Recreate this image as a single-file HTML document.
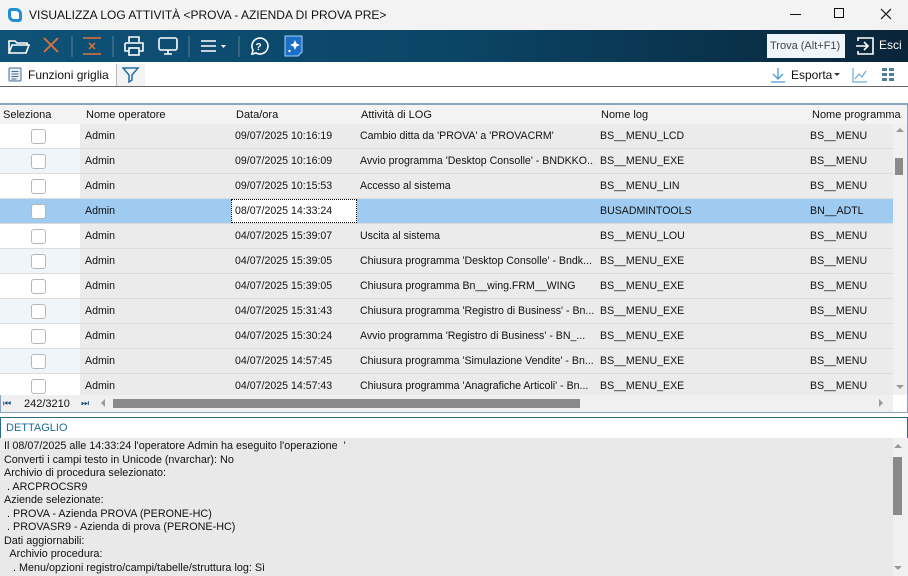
<!DOCTYPE html>
<html><head><meta charset="utf-8"><style>
*{box-sizing:border-box;margin:0;padding:0}
html,body{width:908px;height:576px;overflow:hidden}
body{background:#fff;font-family:"Liberation Sans","DejaVu Sans",sans-serif;font-size:11px;color:#111;position:relative}
.abs{position:absolute}
#title{left:0;top:0;width:908px;height:30px;background:#f3f3f3;font-size:12px}
#tb{left:0;top:30px;width:908px;height:32px;background:linear-gradient(90deg,#0f5278 0%,#0b4566 50%,#0a2438 100%)}
#gt{left:0;top:62px;width:908px;height:25px;background:#fff;border-bottom:1px solid #666}
.hd{top:104px;height:21px;background:#f3f3f3;border:1px solid #8aa3c0;border-left:none;padding:4px 3px;font-size:11px;white-space:nowrap;overflow:hidden}
.row{position:absolute;left:0;width:893px;height:25px;background:#ebebeb;border-bottom:1px solid #dcdcdc;font-size:10.6px}
.row div{position:absolute;top:6px;white-space:nowrap}
.row .sel{left:0;top:0;width:80px;height:24px;background:#fff}
.row .cb{left:31px;top:5px;width:15px;height:15px;border:1px solid #b7b7b7;border-radius:3px;background:#fff}
.row.s{background:#9fcbf1}
.row.s .sel{background:#9fcbf1}
#det{left:0;top:438px;width:893px;height:138px;background:#e9e9e9;padding:2px 4px;font-size:10.8px;line-height:13.5px;white-space:pre;overflow:hidden}
</style></head><body>
<div id="title" class="abs">
 <div class="abs" style="left:8px;top:8px;width:14px;height:14px;background:#1e8fd8;border-radius:3px 6px 3px 6px"></div>
 <div class="abs" style="left:11px;top:11px;width:8px;height:8px;background:#fff;border-radius:1px 3px 1px 3px"></div>
 <div class="abs" style="left:29px;top:8px">VISUALIZZA LOG ATTIVITÀ &lt;PROVA - AZIENDA DI PROVA PRE&gt;</div>
 <div class="abs" style="left:790px;top:14px;width:11px;height:1px;background:#111"></div>
 <div class="abs" style="left:834px;top:8px;width:10px;height:10px;border:1px solid #111"></div>
 <svg class="abs" style="left:880px;top:8px" width="12" height="12"><path d="M1 1L11 11M11 1L1 11" stroke="#111" stroke-width="1.2"/></svg>
</div>
<div id="tb" class="abs">
 <svg class="abs" style="left:0;top:0" width="310" height="32">
  <path d="M9 11h6l2 2h10v2H12l-3 8zM9 23l3-8h17l-3 8z" fill="none" stroke="#fff" stroke-width="1.6"/>
  <path d="M44 8L58 22M58 8L44 22" stroke="#e0743a" stroke-width="1.8"/>
  <line x1="72" y1="6" x2="72" y2="27" stroke="#5a7f96"/>
  <path d="M83 8h18M83 24h18" stroke="#e0743a" stroke-width="1.5"/><path d="M89 13l6 6M95 13l-6 6" stroke="#e0743a" stroke-width="1.5"/>
  <line x1="113" y1="6" x2="113" y2="27" stroke="#5a7f96"/>
  <path d="M129 12V7h10v5M125 13h18v8h-4M129 21h-4v-8" fill="none" stroke="#fff" stroke-width="1.6"/><rect x="129" y="18" width="10" height="7" fill="none" stroke="#fff" stroke-width="1.6"/>
  <rect x="159" y="8" width="18" height="12" rx="2" fill="none" stroke="#fff" stroke-width="1.6"/><path d="M164 24h8M168 20v4" stroke="#fff" stroke-width="1.6"/>
  <line x1="189" y1="6" x2="189" y2="27" stroke="#5a7f96"/>
  <path d="M201 11h15M201 16h15M201 21h15" stroke="#fff" stroke-width="1.6"/><path d="M221 15h5l-2.5 3z" fill="#fff"/>
  <line x1="239" y1="6" x2="239" y2="27" stroke="#5a7f96"/>
  <path d="M252 24l1-4a8 8 0 1 1 3 3z" fill="none" stroke="#fff" stroke-width="1.6"/><text x="255.5" y="20" fill="#fff" font-size="10" font-weight="bold" font-family="Liberation Sans">?</text>
  <path d="M285 6h17v16l-4 4h-13z" fill="#1c6fc7" stroke="#9fd0ff" stroke-width="1"/><path d="M295 10l1.5 3.5 3.5 1.5-3.5 1.5-1.5 3.5-1.5-3.5-3.5-1.5 3.5-1.5z" fill="#fff"/><circle cx="289.5" cy="21" r="1.2" fill="#fff"/>
 </svg>
 <div class="abs" style="left:767px;top:4px;width:78px;height:24px;background:#eef5fb;color:#444;padding:6px 3px;font-size:11px;white-space:nowrap;overflow:hidden">Trova (Alt+F1)</div>
 <svg class="abs" style="left:855px;top:5px" width="22" height="22"><path d="M3 6V3h15v16H3v-3" fill="none" stroke="#fff" stroke-width="1.6"/><path d="M1 11h12M9 7l4 4-4 4" fill="none" stroke="#fff" stroke-width="1.6"/></svg>
 <div class="abs" style="left:879px;top:8px;color:#fff;font-size:12px">Esci</div>
</div>
<div id="gt" class="abs">
 <svg class="abs" style="left:8px;top:5px" width="14" height="15"><rect x="1" y="1" width="12" height="13" rx="1" fill="#e8eef4" stroke="#4a6e8e"/><path d="M3.5 4.5h7M3.5 7h7M3.5 9.5h7M3.5 12h5" stroke="#4a6e8e"/></svg>
 <div class="abs" style="left:28px;top:6px;font-size:12px">Funzioni griglia</div>
 <div class="abs" style="left:116px;top:2px;width:29px;height:22px;border-left:1px solid #bbb;background:#f3f3f3"></div>
 <svg class="abs" style="left:122px;top:5px" width="18" height="16"><path d="M1 1h15l-6 7v5l-3 2V8z" fill="none" stroke="#1f6ea3" stroke-width="1.5"/></svg>
 <svg class="abs" style="left:770px;top:5px" width="16" height="16"><path d="M8 1v10M3 7l5 5 5-5M1 15h14" fill="none" stroke="#4a9bd1" stroke-width="1.3"/></svg>
 <div class="abs" style="left:791px;top:6px;font-size:12px">Esporta</div>
 <div class="abs" style="left:834px;top:11px;border-left:3px solid transparent;border-right:3px solid transparent;border-top:3px solid #333"></div>
 <svg class="abs" style="left:852px;top:5px" width="16" height="16"><path d="M1 1v14h14" fill="none" stroke="#4a9bd1"/><path d="M3 12l4-5 3 3 4-6" fill="none" stroke="#4a9bd1"/></svg>
 <svg class="abs" style="left:882px;top:6px" width="13" height="13"><g fill="#4e7f96"><rect x="0" y="0" width="5" height="3"/><rect x="7" y="0" width="5" height="3"/><rect x="0" y="5" width="5" height="3"/><rect x="7" y="5" width="5" height="3"/><rect x="0" y="10" width="5" height="3"/><rect x="7" y="10" width="5" height="3"/></g></svg>
</div>
<div class="abs" style="left:0;top:103px;width:908px;height:310px;border:1px solid #8aa3c0"></div>
<div class="abs hd" style="left:0;width:81px;">Seleziona</div>
<div class="abs hd" style="left:80px;width:151px;padding-left:6px">Nome operatore</div>
<div class="abs hd" style="left:230px;width:127px;padding-left:6px">Data/ora</div>
<div class="abs hd" style="left:356px;width:241px;padding-left:5px">Attività di LOG</div>
<div class="abs hd" style="left:596px;width:211px;padding-left:5px">Nome log</div>
<div class="abs hd" style="left:806px;width:102px;padding-left:6px">Nome programma</div>
<div class="abs" style="left:0;top:124px;width:893px;height:271px;overflow:hidden">
<div class="row" style="top:0"><div class="sel"></div><div class="cb"></div><div style="left:85px">Admin</div><div style="left:235px">09/07/2025 10:16:19</div><div style="left:360px">Cambio ditta da 'PROVA' a 'PROVACRM'</div><div style="left:600px">BS__MENU_LCD</div><div style="left:810px">BS__MENU</div></div>
<div class="row" style="top:25px"><div class="sel" style="background:#f0f5fa"></div><div class="cb"></div><div style="left:85px">Admin</div><div style="left:235px">09/07/2025 10:16:09</div><div style="left:360px;width:234px;overflow:hidden">Avvio programma 'Desktop Consolle' - BNDKKO...</div><div style="left:600px">BS__MENU_EXE</div><div style="left:810px">BS__MENU</div></div>
<div class="row" style="top:50px"><div class="sel"></div><div class="cb"></div><div style="left:85px">Admin</div><div style="left:235px">09/07/2025 10:15:53</div><div style="left:360px">Accesso al sistema</div><div style="left:600px">BS__MENU_LIN</div><div style="left:810px">BS__MENU</div></div>
<div class="row s" style="top:75px"><div class="sel"></div><div class="cb"></div><div style="left:85px">Admin</div><div style="left:231px;top:0;width:126px;height:24px;background:#fff;border:1px dotted #000;padding:5px 3px">08/07/2025 14:33:24</div><div style="left:600px">BUSADMINTOOLS</div><div style="left:810px">BN__ADTL</div></div>
<div class="row" style="top:100px"><div class="sel"></div><div class="cb"></div><div style="left:85px">Admin</div><div style="left:235px">04/07/2025 15:39:07</div><div style="left:360px">Uscita al sistema</div><div style="left:600px">BS__MENU_LOU</div><div style="left:810px">BS__MENU</div></div>
<div class="row" style="top:125px"><div class="sel" style="background:#f0f5fa"></div><div class="cb"></div><div style="left:85px">Admin</div><div style="left:235px">04/07/2025 15:39:05</div><div style="left:360px;width:234px;overflow:hidden">Chiusura programma 'Desktop Consolle' - Bndk...</div><div style="left:600px">BS__MENU_EXE</div><div style="left:810px">BS__MENU</div></div>
<div class="row" style="top:150px"><div class="sel"></div><div class="cb"></div><div style="left:85px">Admin</div><div style="left:235px">04/07/2025 15:39:05</div><div style="left:360px">Chiusura programma Bn__wing.FRM__WING</div><div style="left:600px">BS__MENU_EXE</div><div style="left:810px">BS__MENU</div></div>
<div class="row" style="top:175px"><div class="sel" style="background:#f0f5fa"></div><div class="cb"></div><div style="left:85px">Admin</div><div style="left:235px">04/07/2025 15:31:43</div><div style="left:360px;width:234px;overflow:hidden">Chiusura programma 'Registro di Business' - Bn...</div><div style="left:600px">BS__MENU_EXE</div><div style="left:810px">BS__MENU</div></div>
<div class="row" style="top:200px"><div class="sel"></div><div class="cb"></div><div style="left:85px">Admin</div><div style="left:235px">04/07/2025 15:30:24</div><div style="left:360px;width:234px;overflow:hidden">Avvio programma 'Registro di Business' - BN_...</div><div style="left:600px">BS__MENU_EXE</div><div style="left:810px">BS__MENU</div></div>
<div class="row" style="top:225px"><div class="sel" style="background:#f0f5fa"></div><div class="cb"></div><div style="left:85px">Admin</div><div style="left:235px">04/07/2025 14:57:45</div><div style="left:360px;width:234px;overflow:hidden">Chiusura programma 'Simulazione Vendite' - Bn...</div><div style="left:600px">BS__MENU_EXE</div><div style="left:810px">BS__MENU</div></div>
<div class="row" style="top:250px"><div class="sel"></div><div class="cb"></div><div style="left:85px">Admin</div><div style="left:235px">04/07/2025 14:57:43</div><div style="left:360px;width:234px;overflow:hidden">Chiusura programma 'Anagrafiche Articoli' - Bn...</div><div style="left:600px">BS__MENU_EXE</div><div style="left:810px">BS__MENU</div></div>
</div>
<div class="abs" style="left:893px;top:124px;width:15px;height:271px;background:#f0f0f0;border-right:1px solid #8aa3c0"></div>
<div class="abs" style="left:896px;top:128px;border-left:4px solid transparent;border-right:4px solid transparent;border-bottom:4px solid #999"></div>
<div class="abs" style="left:895px;top:158px;width:8px;height:17px;background:#8a8a8a"></div>
<div class="abs" style="left:896px;top:385px;border-left:4px solid transparent;border-right:4px solid transparent;border-top:4px solid #999"></div>
<div class="abs" style="left:1px;top:395px;width:892px;height:17px;background:#f0f0f0"></div>
<div class="abs" style="left:3px;top:398px;font-size:9px;color:#1b4f7a">⏮</div>
<div class="abs" style="left:24px;top:398px">242/3210</div>
<div class="abs" style="left:81px;top:398px;font-size:9px;color:#1b4f7a">⏭</div>
<div class="abs" style="left:101px;top:399px;border-top:4px solid transparent;border-bottom:4px solid transparent;border-right:4px solid #999"></div>
<div class="abs" style="left:113px;top:399px;width:467px;height:9px;background:#8a8a8a"></div>
<div class="abs" style="left:879px;top:399px;border-top:4px solid transparent;border-bottom:4px solid transparent;border-left:4px solid #999"></div>
<div class="abs" style="left:0;top:417px;width:908px;height:22px;border:1px solid #2a6a84;background:#fff;color:#1f6a96;padding:4px 5px;font-size:11px">DETTAGLIO</div>
<div id="det" class="abs">Il 08/07/2025 alle 14:33:24 l'operatore Admin ha eseguito l'operazione  '
Converti i campi testo in Unicode (nvarchar): No
Archivio di procedura selezionato:
 . ARCPROCSR9
Aziende selezionate:
 . PROVA - Azienda PROVA (PERONE-HC)
 . PROVASR9 - Azienda di prova (PERONE-HC)
Dati aggiornabili:
  Archivio procedura:
   . Menu/opzioni registro/campi/tabelle/struttura log: Sì
   . Stampe parametriche: Sì</div>
<div class="abs" style="left:893px;top:438px;width:15px;height:138px;background:#f0f0f0"></div>
<div class="abs" style="left:894px;top:444px;border-left:4px solid transparent;border-right:4px solid transparent;border-bottom:4px solid #999"></div>
<div class="abs" style="left:893px;top:457px;width:9px;height:58px;background:#8a8a8a"></div>
<div class="abs" style="left:894px;top:566px;border-left:4px solid transparent;border-right:4px solid transparent;border-top:4px solid #999"></div>
</body></html>
